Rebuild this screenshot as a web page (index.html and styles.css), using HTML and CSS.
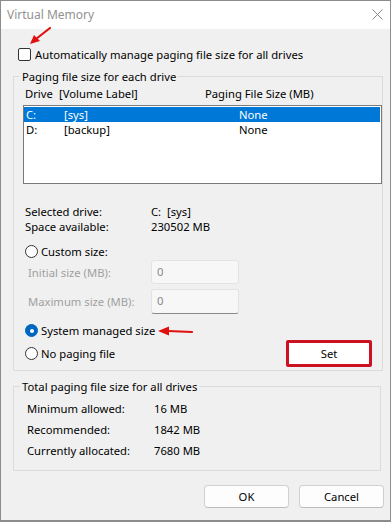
FILE: index.html
```html
<!DOCTYPE html>
<html lang="en">
<head>
    <meta charset="UTF-8">
    <meta name="viewport" content="width=device-width, initial-scale=1.0">
    <title>Virtual Memory</title>
    <link rel="stylesheet" href="styles.css">
</head>
<body>
    <div class="window">
        <div class="titlebar">
            <span class="title">Virtual Memory</span>
            <svg class="close" width="11" height="11" viewBox="0 0 11 11">
                <path d="M0.5 0.5 L10.5 10.5 M10.5 0.5 L0.5 10.5" stroke="#8a8a8a" stroke-width="1" fill="none"/>
            </svg>
        </div>

        <div class="content">
            <!-- red pointer arrows drawn over the dialog -->
            <svg class="arrow arrow-top" width="26" height="20" viewBox="0 0 26 20">
                <path d="M22 2 L8 13" stroke="#e01010" stroke-width="2.2" fill="none" stroke-linecap="round"/>
                <path d="M2 18 L6 9 L12 15 Z" fill="#e01010"/>
            </svg>
            <svg class="arrow arrow-side" width="36" height="10" viewBox="0 0 36 10">
                <path d="M10 5 L34 6" stroke="#e01010" stroke-width="2.2" fill="none" stroke-linecap="round"/>
                <path d="M0 5 L11 0.5 L11 9.5 Z" fill="#e01010"/>
            </svg>

            <label class="check-row">
                <span class="checkbox"></span>
                <span>Automatically manage paging file size for all drives</span>
            </label>

            <fieldset class="group group-drives">
                <legend>Paging file size for each drive</legend>

                <div class="list-head">
                    <span class="col-drive">Drive</span>
                    <span class="col-label">[Volume Label]</span>
                    <span class="col-size">Paging File Size (MB)</span>
                </div>
                <div class="drive-list">
                    <div class="drive-row selected">
                        <span class="col-drive">C:</span>
                        <span class="col-label">[sys]</span>
                        <span class="col-size">None</span>
                    </div>
                    <div class="drive-row">
                        <span class="col-drive">D:</span>
                        <span class="col-label">[backup]</span>
                        <span class="col-size">None</span>
                    </div>
                </div>

                <div class="info-row first">
                    <span class="info-label">Selected drive:</span>
                    <span>C:&nbsp; [sys]</span>
                </div>
                <div class="info-row">
                    <span class="info-label">Space available:</span>
                    <span>230502 MB</span>
                </div>

                <label class="radio-row custom">
                    <span class="radio"></span>
                    <span>Custom size:</span>
                </label>
                <div class="size-row initial">
                    <span class="size-label">Initial size (MB):</span>
                    <span class="size-input">0</span>
                </div>
                <div class="size-row maximum">
                    <span class="size-label">Maximum size (MB):</span>
                    <span class="size-input focused">0</span>
                </div>

                <label class="radio-row managed">
                    <span class="radio checked"></span>
                    <span>System managed size</span>
                </label>
                <div class="last-row">
                    <label class="radio-row">
                        <span class="radio"></span>
                        <span>No paging file</span>
                    </label>
                    <button class="btn btn-set">Set</button>
                </div>
            </fieldset>

            <fieldset class="group group-total">
                <legend>Total paging file size for all drives</legend>
                <div class="total-row">
                    <span class="total-label">Minimum allowed:</span>
                    <span>16 MB</span>
                </div>
                <div class="total-row">
                    <span class="total-label">Recommended:</span>
                    <span>1842 MB</span>
                </div>
                <div class="total-row">
                    <span class="total-label">Currently allocated:</span>
                    <span>7680 MB</span>
                </div>
            </fieldset>

            <div class="buttons">
                <button class="btn">OK</button>
                <button class="btn">Cancel</button>
            </div>
        </div>
    </div>
</body>
</html>
```

FILE: styles.css
```css
* {
    margin: 0;
    padding: 0;
    box-sizing: border-box;
}

body {
    font-family: 'Noto Sans', 'Liberation Sans', sans-serif;
    font-size: 11.25px;
    color: #000;
    background: #fff;
}

.window {
    width: 391px;
    height: 522px;
    border: 1px solid #8c8c8c;
    border-bottom-width: 2px;
    display: flex;
    flex-direction: column;
    background: #f0f0f0;
}

.titlebar {
    height: 28px;
    background: #fff;
    display: flex;
    justify-content: space-between;
    align-items: center;
    padding: 0 6px 2px 6px;
}

.title {
    color: #929292;
    font-size: 12px;
}

.close {
    margin-right: 1px;
}

.content {
    flex: 1;
    position: relative;
    padding: 18px 0 0 11px;
}

.arrow {
    position: absolute;
}

.arrow-top {
    left: 27px;
    top: -3px;
}

.arrow-side {
    left: 157px;
    top: 297px;
}

.check-row,
.radio-row {
    display: flex;
    align-items: center;
    height: 15px;
    line-height: 15px;
}

.check-row {
    margin-left: 6px;
}

.checkbox {
    width: 13px;
    height: 13px;
    border: 1px solid #333;
    border-radius: 2px;
    background: #fff;
    margin-right: 4px;
}

.radio {
    width: 13px;
    height: 13px;
    border: 1px solid #333;
    border-radius: 50%;
    background: #fff;
    margin-right: 3px;
    position: relative;
}

.radio.checked {
    border-color: #0067c0;
    background: #0067c0;
}

.radio.checked::after {
    content: "";
    position: absolute;
    left: 3.5px;
    top: 3.5px;
    width: 4px;
    height: 4px;
    border-radius: 50%;
    background: #fff;
}

.group {
    border: 1px solid #dcdcdc;
    padding: 0;
    width: 368px;
    margin-left: 1px;
}

.group legend {
    margin-left: 6px;
    padding: 0 2px;
    line-height: 15px;
}

.group-drives {
    margin-top: 7px;
    padding-bottom: 3px;
}

.list-head {
    display: flex;
    height: 15px;
    line-height: 15px;
    margin: 2px 0 0 11px;
}

.list-head .col-drive { width: 34px; }
.list-head .col-label { width: 146px; }

.drive-list {
    width: 359px;
    height: 79px;
    margin: 4px 0 0 9px;
    border: 1px solid #7a7a7a;
    background: #fff;
    padding: 1px 1px 0 0;
}

.drive-row {
    display: flex;
    height: 15px;
    line-height: 15px;
    padding-left: 2px;
}

.drive-row.selected {
    background: #0078d7;
    color: #fff;
}

.drive-row .col-drive { width: 38px; }
.drive-row .col-label { width: 175px; }

.info-row {
    display: flex;
    height: 15px;
    line-height: 15px;
    margin-left: 11px;
}

.info-row.first {
    margin-top: 20px;
}

.info-label {
    width: 126px;
}

.radio-row {
    margin-left: 11px;
}

.radio-row.custom {
    margin-top: 10px;
}

.size-row {
    display: flex;
    align-items: center;
    margin-left: 14px;
    color: #a0a0a0;
}

.size-row.initial {
    margin-top: 1px;
}

.size-row.maximum {
    margin-top: 5px;
}

.size-label {
    width: 123px;
}

.size-input {
    width: 88px;
    height: 24px;
    line-height: 22px;
    padding-left: 5px;
    border: 1px solid #e3e3e3;
    border-radius: 3px;
    background: #f7f7f7;
    color: #8a8a8a;
}

.size-input.focused {
    height: 25px;
    border-bottom-color: #8a8a8a;
}

.radio-row.managed {
    margin-top: 9px;
}

.last-row {
    display: flex;
    justify-content: space-between;
    align-items: center;
    margin-top: 2px;
    padding-right: 10px;
}

.btn {
    font-family: inherit;
    font-size: 11.25px;
    color: #000;
    background: #fdfdfd;
    border: 1px solid #d0d0d0;
    border-bottom-color: #bcbcbc;
    border-radius: 4px;
    width: 85px;
    height: 23px;
}

.btn-set {
    width: 86px;
    height: 27px;
    border: 3px solid #cc1122;
    border-radius: 2px;
    background: #fff;
}

.group-total {
    margin-top: 8px;
    padding: 4px 0 9px 0;
}

.total-row {
    display: flex;
    height: 21px;
    line-height: 21px;
    margin-left: 13px;
}

.total-label {
    width: 127px;
}

.buttons {
    display: flex;
    justify-content: flex-end;
    gap: 10px;
    margin-top: 14px;
    padding-right: 6px;
}
```
